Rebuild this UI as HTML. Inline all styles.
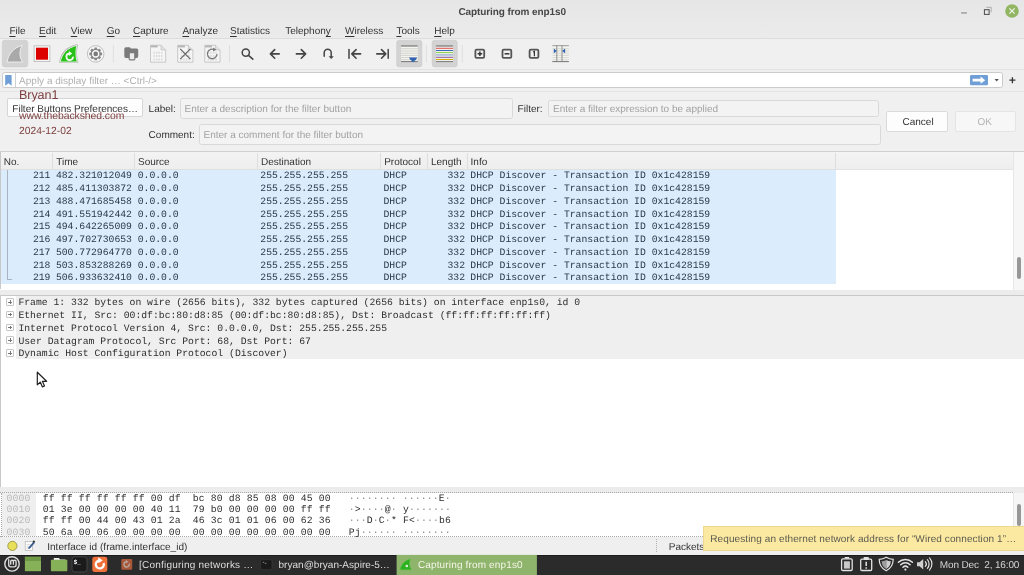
<!DOCTYPE html>
<html lang="en"><head><meta charset="utf-8"><title>Capturing from enp1s0</title>
<style>
html,body{margin:0;padding:0;}
body{width:1024px;height:575px;overflow:hidden;position:relative;background:#efefef;font-family:"Liberation Sans", sans-serif;}
div,span.t,svg{position:absolute;box-sizing:border-box;}
.t{white-space:pre;font-family:"Liberation Sans", sans-serif;text-rendering:geometricPrecision;}
.m{font-family:"Liberation Mono", monospace;}
.m i{font-style:normal;color:#8e8e8e;}
u{text-decoration:underline;text-underline-offset:1.7px;text-decoration-thickness:0.8px}
#root{left:0;top:0;width:1024px;height:575px;will-change:transform;}
</style></head><body><div id="root">
<div style="left:0px;top:0px;width:1024px;height:38px;background:linear-gradient(#e6e6e6,#e9e9e9 55%,#ebebeb);"></div>
<span class="t" style="left:458.5px;top:6px;font-size:10px;line-height:13px;color:#474747;font-weight:700;letter-spacing:-0.1px;">Capturing from enp1s0</span>
<svg style="left:955px;top:2px" width="66" height="20" viewBox="0 0 66 20"><rect x="6.1" y="10.4" width="5.8" height="1.1" fill="#858585"/><path d="M31.2 5.3h5v5" fill="none" stroke="#a0a0a0" stroke-width="0.8"/><rect x="29.4" y="7.7" width="4.7" height="4.7" fill="none" stroke="#4a4a4a" stroke-width="1"/><circle cx="57" cy="9" r="6.8" fill="#92b563"/><path d="M54.4 6.4l5.2 5.2M59.6 6.4l-5.2 5.2" stroke="#f4f8ee" stroke-width="1.1" fill="none"/></svg>
<div style="left:0px;top:38px;width:1024px;height:1px;background:#dcdcdc;"></div>
<span class="t" style="left:9.4px;top:25px;font-size:10px;line-height:13px;color:#333;"><u>F</u>ile</span>
<span class="t" style="left:39.1px;top:25px;font-size:10px;line-height:13px;color:#333;"><u>E</u>dit</span>
<span class="t" style="left:70.7px;top:25px;font-size:10px;line-height:13px;color:#333;"><u>V</u>iew</span>
<span class="t" style="left:106.7px;top:25px;font-size:10px;line-height:13px;color:#333;"><u>G</u>o</span>
<span class="t" style="left:133px;top:25px;font-size:10px;line-height:13px;color:#333;"><u>C</u>apture</span>
<span class="t" style="left:182.4px;top:25px;font-size:10px;line-height:13px;color:#333;"><u>A</u>nalyze</span>
<span class="t" style="left:230px;top:25px;font-size:10px;line-height:13px;color:#333;"><u>S</u>tatistics</span>
<span class="t" style="left:285.2px;top:25px;font-size:10px;line-height:13px;color:#333;">Telephon<u>y</u></span>
<span class="t" style="left:345px;top:25px;font-size:10px;line-height:13px;color:#333;"><u>W</u>ireless</span>
<span class="t" style="left:396.4px;top:25px;font-size:10px;line-height:13px;color:#333;"><u>T</u>ools</span>
<span class="t" style="left:434.2px;top:25px;font-size:10px;line-height:13px;color:#333;"><u>H</u>elp</span>
<div style="left:0px;top:39px;width:1024px;height:30px;background:#f0f0f0;"></div>
<div style="left:0px;top:68.5px;width:1024px;height:1px;background:#e2e2e2;"></div>
<svg style="left:0;top:39px" width="600" height="30" viewBox="0 39 600 30"><rect x="2.3" y="40.3" width="25.4" height="26.6" rx="2.5" fill="#d3d3d3" stroke="#cacaca" stroke-width="0.6"/><g transform="translate(0,0)"><path d="M7.2 62 C8.2 54 13.8 47.6 22.1 45.4 C19.2 50.6 19 56.8 22.6 62 Z" fill="#a9a9a9" stroke="#d3d3d3" stroke-width="2.2" stroke-linejoin="round"/><path d="M7.2 62 C8.2 54 13.8 47.6 22.1 45.4 C19.2 50.6 19 56.8 22.6 62 Z" fill="#a9a9a9" stroke="#f2f2f2" stroke-width="0.9" stroke-linejoin="round"/></g><rect x="34.1" y="45.8" width="15.8" height="15.8" fill="#f4f4f4" stroke="#b9b9b9" stroke-width="0.8"/><rect x="36" y="47.7" width="12" height="12" fill="#dc0000"/><path d="M60.3 62 C61.6 54 67.2 47.6 76.9 45.4 C75.4 50.6 75.6 57 77.3 62 Z" fill="#27c118" stroke="#b4b4b4" stroke-width="2.2" stroke-linejoin="round"/><path d="M60.3 62 C61.6 54 67.2 47.6 76.9 45.4 C75.4 50.6 75.6 57 77.3 62 Z" fill="#27c118" stroke="#e9f5e6" stroke-width="0.9" stroke-linejoin="round"/><path d="M73 56.6 A3.3 3.3 0 1 1 69.4 53.5" fill="none" stroke="#f2fbf0" stroke-width="1.8"/><path d="M68.9 51 L72.2 53.5 L68.9 55.9 Z" fill="#f2fbf0"/><circle cx="95.7" cy="53.9" r="8.3" fill="#f7f7f7" stroke="#b0b0b0" stroke-width="0.8"/><rect x="94.4" y="47.5" width="2.6" height="2.4" rx="0.5" fill="#858585" transform="rotate(0 95.7 53.9)"/><rect x="94.4" y="47.5" width="2.6" height="2.4" rx="0.5" fill="#858585" transform="rotate(45 95.7 53.9)"/><rect x="94.4" y="47.5" width="2.6" height="2.4" rx="0.5" fill="#858585" transform="rotate(90 95.7 53.9)"/><rect x="94.4" y="47.5" width="2.6" height="2.4" rx="0.5" fill="#858585" transform="rotate(135 95.7 53.9)"/><rect x="94.4" y="47.5" width="2.6" height="2.4" rx="0.5" fill="#858585" transform="rotate(180 95.7 53.9)"/><rect x="94.4" y="47.5" width="2.6" height="2.4" rx="0.5" fill="#858585" transform="rotate(225 95.7 53.9)"/><rect x="94.4" y="47.5" width="2.6" height="2.4" rx="0.5" fill="#858585" transform="rotate(270 95.7 53.9)"/><rect x="94.4" y="47.5" width="2.6" height="2.4" rx="0.5" fill="#858585" transform="rotate(315 95.7 53.9)"/><circle cx="95.7" cy="53.9" r="4.5" fill="none" stroke="#858585" stroke-width="1.4"/><circle cx="95.7" cy="53.9" r="2.3" fill="#7a7a7a"/><rect x="112.89999999999999" y="45" width="0.8" height="17.5" fill="#dadada"/><path d="M126.3 47.3h3.6l1 1.2h5.7a1.6 1.6 0 0 1 1.6 1.6v6.2a1.6 1.6 0 0 1-1.6 1.6h-10.7a1.6 1.6 0 0 1-1.6-1.6v-7.4a1.6 1.6 0 0 1 1.6-1.6z" fill="#7b7b7b"/><rect x="129.2" y="52.6" width="5.6" height="7.2" rx="0.8" fill="#ededed" stroke="#7b7b7b" stroke-width="1.2"/><path d="M150.5 45.3h10.6l4.6 4.6v12.3h-15.2z" fill="#f5f5f5" stroke="#bdbdbd" stroke-width="0.8"/><path d="M161.1 45.3v4.6h4.6" fill="#e2e2e2" stroke="#bdbdbd" stroke-width="0.7"/><rect x="150.9" y="45.5" width="6.8" height="1.9" fill="#b4b4b4"/><path d="M153.5 52.7h9.4" stroke="#dcdcdc" stroke-width="2" stroke-dasharray="1.6 0.9"/><path d="M153.5 56.1h9.4" stroke="#dcdcdc" stroke-width="2" stroke-dasharray="1.6 0.9"/><path d="M153.5 59.5h9.4" stroke="#dcdcdc" stroke-width="2" stroke-dasharray="1.6 0.9"/><path d="M177.7 45.3h10.6l4.6 4.6v12.3h-15.2z" fill="#f5f5f5" stroke="#bdbdbd" stroke-width="0.8"/><path d="M188.29999999999998 45.3v4.6h4.6" fill="#e2e2e2" stroke="#bdbdbd" stroke-width="0.7"/><rect x="178.1" y="45.5" width="6.8" height="1.9" fill="#b4b4b4"/><path d="M180.7 52.7h9.4" stroke="#dcdcdc" stroke-width="2" stroke-dasharray="1.6 0.9"/><path d="M180.7 56.1h9.4" stroke="#dcdcdc" stroke-width="2" stroke-dasharray="1.6 0.9"/><path d="M180.7 59.5h9.4" stroke="#dcdcdc" stroke-width="2" stroke-dasharray="1.6 0.9"/><path d="M180.2 48.9l10.2 10.2M190.4 48.9l-10.2 10.2" stroke="#6a6a6a" stroke-width="1.3" fill="none"/><path d="M204.8 45.3h10.6l4.6 4.6v12.3h-15.2z" fill="#f5f5f5" stroke="#bdbdbd" stroke-width="0.8"/><path d="M215.4 45.3v4.6h4.6" fill="#e2e2e2" stroke="#bdbdbd" stroke-width="0.7"/><rect x="205.20000000000002" y="45.5" width="6.8" height="1.9" fill="#b4b4b4"/><path d="M207.8 52.7h9.4" stroke="#dcdcdc" stroke-width="2" stroke-dasharray="1.6 0.9"/><path d="M207.8 56.1h9.4" stroke="#dcdcdc" stroke-width="2" stroke-dasharray="1.6 0.9"/><path d="M207.8 59.5h9.4" stroke="#dcdcdc" stroke-width="2" stroke-dasharray="1.6 0.9"/><path d="M214.6 49.8 A4.8 4.8 0 1 0 217 53.9" fill="none" stroke="#7a7a7a" stroke-width="1.3"/><path d="M213.2 47.6l3.2 2.1-3.4 1.9z" fill="#7a7a7a"/><rect x="229.0" y="45" width="0.8" height="17.5" fill="#dadada"/><circle cx="245.8" cy="52.6" r="3.6" fill="none" stroke="#454545" stroke-width="1.5"/><path d="M248.5 55.3l4.3 3.9" stroke="#454545" stroke-width="1.6" stroke-linecap="round"/><path d="M279.2 53.9H270.6M274.7 49.6L270.4 53.9l4.3 4.3" fill="none" stroke="#454545" stroke-width="1.6" stroke-linecap="round" stroke-linejoin="round"/><path d="M296.4 53.9H305.4M301.3 49.6L305.6 53.9l-4.3 4.3" fill="none" stroke="#454545" stroke-width="1.6" stroke-linecap="round" stroke-linejoin="round"/><path d="M324.2 56.2v-3.4a3.5 3.5 0 0 1 7 0v4" fill="none" stroke="#454545" stroke-width="1.5" stroke-linecap="round"/><path d="M328.6 56.2h5.2l-2.6 2.8z" fill="#454545"/><path d="M349 49.6v8.6" stroke="#454545" stroke-width="1.5" stroke-linecap="round"/><path d="M360.6 53.9H352.0M356.09999999999997 49.6L351.79999999999995 53.9l4.3 4.3" fill="none" stroke="#454545" stroke-width="1.6" stroke-linecap="round" stroke-linejoin="round"/><path d="M376.8 53.9H385.59999999999997M381.5 49.6L385.8 53.9l-4.3 4.3" fill="none" stroke="#454545" stroke-width="1.6" stroke-linecap="round" stroke-linejoin="round"/><path d="M388.2 49.6v8.6" stroke="#454545" stroke-width="1.5" stroke-linecap="round"/><rect x="396.7" y="40.3" width="25.2" height="26.6" rx="2.5" fill="#d3d3d3" stroke="#cacaca" stroke-width="0.6"/><rect x="401" y="45" width="16.8" height="17" fill="#f3f3ef"/><rect x="401" y="45" width="16.8" height="1.8" fill="#9a9a9a"/><rect x="401" y="48.3" width="16.8" height="0.9" fill="#cfcfcb"/><rect x="401" y="50.5" width="16.8" height="0.9" fill="#cfcfcb"/><rect x="401" y="52.7" width="16.8" height="0.9" fill="#cfcfcb"/><rect x="401" y="54.9" width="16.8" height="0.9" fill="#cfcfcb"/><rect x="401" y="57.1" width="16.8" height="0.9" fill="#cfcfcb"/><rect x="401" y="59.3" width="16.8" height="0.9" fill="#cfcfcb"/><rect x="401" y="61.2" width="16.8" height="0.9" fill="#666"/><path d="M409 57.6h8.2l-1.6 2.6h-1v1.6h-3v-1.6h-1z" fill="#2f63b2"/><rect x="425.90000000000003" y="45" width="0.8" height="17.5" fill="#dadada"/><rect x="432.2" y="40.3" width="25" height="26.6" rx="2.5" fill="#d3d3d3" stroke="#cacaca" stroke-width="0.6"/><rect x="436" y="45" width="17" height="17" fill="#f0f0ee"/><rect x="436" y="45" width="17" height="1.8" fill="#9a9a9a"/><rect x="436" y="47.8" width="17" height="1" fill="#e25252"/><rect x="436" y="50.0" width="17" height="1" fill="#3b6db3"/><rect x="436" y="52.1" width="17" height="1" fill="#8bd13f"/><rect x="436" y="54.1" width="17" height="1.6" fill="#a9bcd9"/><rect x="436" y="56.8" width="17" height="1" fill="#8c5a95"/><rect x="436" y="59.0" width="17" height="1" fill="#d5ab00"/><rect x="436" y="61.1" width="17" height="1" fill="#777"/><rect x="461.8" y="45" width="0.8" height="17.5" fill="#dadada"/><rect x="475.40000000000003" y="49.7" width="8.8" height="8.2" rx="1.2" fill="none" stroke="#555" stroke-width="1.8"/><path d="M477.6 53.8h4.6M479.9 51.5v4.6" stroke="#333" stroke-width="1.5"/><rect x="502.5" y="49.7" width="8.8" height="8.2" rx="1.2" fill="none" stroke="#555" stroke-width="1.8"/><path d="M504.6 53.8h4.8" stroke="#333" stroke-width="1.5"/><rect x="529.5999999999999" y="49.7" width="8.8" height="8.2" rx="1.2" fill="none" stroke="#555" stroke-width="1.8"/><path d="M533.2 52.1l1.2-.6v4.7" stroke="#333" stroke-width="1.2" fill="none"/><rect x="552.3" y="45.3" width="16.6" height="16.5" fill="#f3f3ef"/><rect x="552.3" y="48.3" width="16.6" height="0.9" fill="#d6d6d2"/><rect x="552.3" y="50.5" width="16.6" height="0.9" fill="#d6d6d2"/><rect x="552.3" y="52.7" width="16.6" height="0.9" fill="#d6d6d2"/><rect x="552.3" y="54.9" width="16.6" height="0.9" fill="#d6d6d2"/><rect x="552.3" y="57.1" width="16.6" height="0.9" fill="#d6d6d2"/><rect x="552.3" y="59.3" width="16.6" height="0.9" fill="#d6d6d2"/><rect x="552.3" y="45.2" width="16.6" height="1" fill="#9a9a9a"/><rect x="552.3" y="61.2" width="16.6" height="0.9" fill="#666"/><path d="M556.8 45.3v16.4M562 45.3v16.4" stroke="#7a7a7a" stroke-width="0.8"/><path d="M553.8 48.5l3 2.4-3 2.4z" fill="#2f63b2"/><path d="M565.1 48.5l-3 2.4 3 2.4z" fill="#2f63b2"/></svg>
<div style="left:0px;top:69.5px;width:1024px;height:19px;background:#efefef;"></div>
<div style="left:1.8px;top:72px;width:1001px;height:15.6px;background:#fff;border:1px solid #cbcbcb;border-radius:2.5px;"></div>
<div style="left:15.3px;top:72.6px;width:0.8px;height:14.4px;background:#d0d0d0;"></div>
<svg style="left:4px;top:74px" width="10" height="13" viewBox="4 74 10 13"><path d="M5.2 75h6.4v10.8l-3.2-2.6-3.2 2.6z" fill="#6f9fd6"/></svg>
<span class="t" style="left:19.1px;top:75px;font-size:10px;line-height:13px;color:#b0b0b0;">Apply a display filter … &lt;Ctrl-/&gt;</span>
<svg style="left:968px;top:73px" width="56" height="14" viewBox="968 73 56 14"><rect x="970" y="75" width="18" height="10.3" rx="1.2" fill="#6f9fd6"/><path d="M972.6 78.8h8v-2.2l4.6 3.6-4.6 3.6v-2.2h-8z" fill="#fff"/><path d="M994.5 78.9h4.4l-2.2 2.6z" fill="#555"/><path d="M1009.4 80.2h6M1012.4 77.2v6" stroke="#333" stroke-width="1.3"/></svg>
<div style="left:0px;top:88.5px;width:1024px;height:62.5px;background:#f0f0f0;"></div>
<div style="left:0px;top:91.2px;width:1024px;height:0.8px;background:#e4e4e4;"></div>
<div style="left:7.3px;top:98.2px;width:135.4px;height:19px;background:#fdfdfd;border:1px solid #d6d6d6;border-radius:2px;"></div>
<span class="t" style="left:12.3px;top:103px;font-size:10px;line-height:13px;color:#333;">Filter Buttons Preferences…</span>
<span class="t" style="left:148.6px;top:103px;font-size:10px;line-height:13px;color:#333;">Label:</span>
<div style="left:180.2px;top:98.3px;width:332.5px;height:20.3px;background:#f3f3f3;border:1px solid #d9d9d9;border-radius:2.5px;"></div>
<span class="t" style="left:184.5px;top:103px;font-size:10px;line-height:13px;color:#a2a2a2;">Enter a description for the filter button</span>
<span class="t" style="left:517.6px;top:103px;font-size:10px;line-height:13px;color:#333;">Filter:</span>
<div style="left:548.3px;top:100.4px;width:330.3px;height:16.2px;background:#f3f3f3;border:1px solid #d9d9d9;border-radius:2.5px;"></div>
<span class="t" style="left:553px;top:103px;font-size:10px;line-height:13px;color:#a2a2a2;">Enter a filter expression to be applied</span>
<span class="t" style="left:148.6px;top:129px;font-size:10px;line-height:13px;color:#333;">Comment:</span>
<div style="left:199.2px;top:123.5px;width:681.5px;height:21px;background:#f3f3f3;border:1px solid #d9d9d9;border-radius:2.5px;"></div>
<span class="t" style="left:203.5px;top:129px;font-size:10px;line-height:13px;color:#a2a2a2;">Enter a comment for the filter button</span>
<div style="left:886.4px;top:111.4px;width:61.6px;height:20.2px;background:#fdfdfd;border:1px solid #dadada;border-radius:2px;"></div>
<span class="t" style="left:902.5px;top:116px;font-size:10px;line-height:13px;color:#333;">Cancel</span>
<div style="left:954.5px;top:111.4px;width:61.6px;height:20.2px;background:#f7f7f7;border:1px solid #e4e4e4;border-radius:2px;"></div>
<span class="t" style="left:977.5px;top:116px;font-size:10px;line-height:13px;color:#b4b4b4;">OK</span>
<span class="t" style="left:19px;top:87px;font-size:12.6px;line-height:16px;color:#7d3f3f;letter-spacing:-0.1px;">Bryan1</span>
<span class="t" style="left:19px;top:110px;font-size:10.4px;line-height:14px;color:#7d3f3f;letter-spacing:-0.05px;">www.thebackshed.com</span>
<span class="t" style="left:19px;top:125px;font-size:10.3px;line-height:13px;color:#7d3f3f;">2024-12-02</span>
<div style="left:0px;top:151px;width:1024px;height:1px;background:#cfcfcf;"></div>
<div style="left:0px;top:152px;width:1024px;height:17.5px;background:#fff;"></div>
<div style="left:0px;top:152px;width:835.8px;height:17.6px;background:linear-gradient(#f3f3f3,#eeeeee);border-bottom:1px solid #e0e0e0;"></div>
<div style="left:835.8px;top:152px;width:177.6px;height:17.6px;background:linear-gradient(#f4f4f4,#eeeeee);border-bottom:1px solid #e2e2e2;"></div>
<div style="left:52.0px;top:152.5px;width:0.8px;height:16.5px;background:#dedede;"></div>
<div style="left:133.9px;top:152.5px;width:0.8px;height:16.5px;background:#dedede;"></div>
<div style="left:257.40000000000003px;top:152.5px;width:0.8px;height:16.5px;background:#dedede;"></div>
<div style="left:380.0px;top:152.5px;width:0.8px;height:16.5px;background:#dedede;"></div>
<div style="left:427.0px;top:152.5px;width:0.8px;height:16.5px;background:#dedede;"></div>
<div style="left:466.90000000000003px;top:152.5px;width:0.8px;height:16.5px;background:#dedede;"></div>
<div style="left:835.4px;top:152.5px;width:0.8px;height:16.5px;background:#dedede;"></div>
<span class="t" style="left:3.8px;top:156px;font-size:10px;line-height:13px;color:#333;">No.</span>
<span class="t" style="left:56.2px;top:156px;font-size:10px;line-height:13px;color:#333;">Time</span>
<span class="t" style="left:138px;top:156px;font-size:10px;line-height:13px;color:#333;">Source</span>
<span class="t" style="left:261px;top:156px;font-size:10px;line-height:13px;color:#333;">Destination</span>
<span class="t" style="left:384.2px;top:156px;font-size:10px;line-height:13px;color:#333;">Protocol</span>
<span class="t" style="left:431px;top:156px;font-size:10px;line-height:13px;color:#333;">Length</span>
<span class="t" style="left:470.6px;top:156px;font-size:10px;line-height:13px;color:#333;">Info</span>
<div style="left:0px;top:169.5px;width:1016px;height:121px;background:#fff;"></div>
<div style="left:0px;top:169.5px;width:835.8px;height:114.8px;background:#dbecfd;"></div>
<span class="t m" style="left:32.9px;top:169px;font-size:9.75px;line-height:13px;color:#2a3947;">211</span>
<span class="t m" style="left:55.9px;top:169px;font-size:9.75px;line-height:13px;color:#2a3947;">482.321012049</span>
<span class="t m" style="left:137.7px;top:169px;font-size:9.75px;line-height:13px;color:#2a3947;">0.0.0.0</span>
<span class="t m" style="left:260.3px;top:169px;font-size:9.75px;line-height:13px;color:#2a3947;">255.255.255.255</span>
<span class="t m" style="left:383.5px;top:169px;font-size:9.75px;line-height:13px;color:#2a3947;">DHCP</span>
<span class="t m" style="left:447.5px;top:169px;font-size:9.75px;line-height:13px;color:#2a3947;">332</span>
<span class="t m" style="left:470.3px;top:169px;font-size:9.75px;line-height:13px;color:#2a3947;">DHCP Discover - Transaction ID 0x1c428159</span>
<span class="t m" style="left:32.9px;top:182px;font-size:9.75px;line-height:13px;color:#2a3947;">212</span>
<span class="t m" style="left:55.9px;top:182px;font-size:9.75px;line-height:13px;color:#2a3947;">485.411303872</span>
<span class="t m" style="left:137.7px;top:182px;font-size:9.75px;line-height:13px;color:#2a3947;">0.0.0.0</span>
<span class="t m" style="left:260.3px;top:182px;font-size:9.75px;line-height:13px;color:#2a3947;">255.255.255.255</span>
<span class="t m" style="left:383.5px;top:182px;font-size:9.75px;line-height:13px;color:#2a3947;">DHCP</span>
<span class="t m" style="left:447.5px;top:182px;font-size:9.75px;line-height:13px;color:#2a3947;">332</span>
<span class="t m" style="left:470.3px;top:182px;font-size:9.75px;line-height:13px;color:#2a3947;">DHCP Discover - Transaction ID 0x1c428159</span>
<span class="t m" style="left:32.9px;top:195px;font-size:9.75px;line-height:13px;color:#2a3947;">213</span>
<span class="t m" style="left:55.9px;top:195px;font-size:9.75px;line-height:13px;color:#2a3947;">488.471685458</span>
<span class="t m" style="left:137.7px;top:195px;font-size:9.75px;line-height:13px;color:#2a3947;">0.0.0.0</span>
<span class="t m" style="left:260.3px;top:195px;font-size:9.75px;line-height:13px;color:#2a3947;">255.255.255.255</span>
<span class="t m" style="left:383.5px;top:195px;font-size:9.75px;line-height:13px;color:#2a3947;">DHCP</span>
<span class="t m" style="left:447.5px;top:195px;font-size:9.75px;line-height:13px;color:#2a3947;">332</span>
<span class="t m" style="left:470.3px;top:195px;font-size:9.75px;line-height:13px;color:#2a3947;">DHCP Discover - Transaction ID 0x1c428159</span>
<span class="t m" style="left:32.9px;top:208px;font-size:9.75px;line-height:13px;color:#2a3947;">214</span>
<span class="t m" style="left:55.9px;top:208px;font-size:9.75px;line-height:13px;color:#2a3947;">491.551942442</span>
<span class="t m" style="left:137.7px;top:208px;font-size:9.75px;line-height:13px;color:#2a3947;">0.0.0.0</span>
<span class="t m" style="left:260.3px;top:208px;font-size:9.75px;line-height:13px;color:#2a3947;">255.255.255.255</span>
<span class="t m" style="left:383.5px;top:208px;font-size:9.75px;line-height:13px;color:#2a3947;">DHCP</span>
<span class="t m" style="left:447.5px;top:208px;font-size:9.75px;line-height:13px;color:#2a3947;">332</span>
<span class="t m" style="left:470.3px;top:208px;font-size:9.75px;line-height:13px;color:#2a3947;">DHCP Discover - Transaction ID 0x1c428159</span>
<span class="t m" style="left:32.9px;top:220px;font-size:9.75px;line-height:13px;color:#2a3947;">215</span>
<span class="t m" style="left:55.9px;top:220px;font-size:9.75px;line-height:13px;color:#2a3947;">494.642265009</span>
<span class="t m" style="left:137.7px;top:220px;font-size:9.75px;line-height:13px;color:#2a3947;">0.0.0.0</span>
<span class="t m" style="left:260.3px;top:220px;font-size:9.75px;line-height:13px;color:#2a3947;">255.255.255.255</span>
<span class="t m" style="left:383.5px;top:220px;font-size:9.75px;line-height:13px;color:#2a3947;">DHCP</span>
<span class="t m" style="left:447.5px;top:220px;font-size:9.75px;line-height:13px;color:#2a3947;">332</span>
<span class="t m" style="left:470.3px;top:220px;font-size:9.75px;line-height:13px;color:#2a3947;">DHCP Discover - Transaction ID 0x1c428159</span>
<span class="t m" style="left:32.9px;top:233px;font-size:9.75px;line-height:13px;color:#2a3947;">216</span>
<span class="t m" style="left:55.9px;top:233px;font-size:9.75px;line-height:13px;color:#2a3947;">497.702730653</span>
<span class="t m" style="left:137.7px;top:233px;font-size:9.75px;line-height:13px;color:#2a3947;">0.0.0.0</span>
<span class="t m" style="left:260.3px;top:233px;font-size:9.75px;line-height:13px;color:#2a3947;">255.255.255.255</span>
<span class="t m" style="left:383.5px;top:233px;font-size:9.75px;line-height:13px;color:#2a3947;">DHCP</span>
<span class="t m" style="left:447.5px;top:233px;font-size:9.75px;line-height:13px;color:#2a3947;">332</span>
<span class="t m" style="left:470.3px;top:233px;font-size:9.75px;line-height:13px;color:#2a3947;">DHCP Discover - Transaction ID 0x1c428159</span>
<span class="t m" style="left:32.9px;top:246px;font-size:9.75px;line-height:13px;color:#2a3947;">217</span>
<span class="t m" style="left:55.9px;top:246px;font-size:9.75px;line-height:13px;color:#2a3947;">500.772964770</span>
<span class="t m" style="left:137.7px;top:246px;font-size:9.75px;line-height:13px;color:#2a3947;">0.0.0.0</span>
<span class="t m" style="left:260.3px;top:246px;font-size:9.75px;line-height:13px;color:#2a3947;">255.255.255.255</span>
<span class="t m" style="left:383.5px;top:246px;font-size:9.75px;line-height:13px;color:#2a3947;">DHCP</span>
<span class="t m" style="left:447.5px;top:246px;font-size:9.75px;line-height:13px;color:#2a3947;">332</span>
<span class="t m" style="left:470.3px;top:246px;font-size:9.75px;line-height:13px;color:#2a3947;">DHCP Discover - Transaction ID 0x1c428159</span>
<span class="t m" style="left:32.9px;top:259px;font-size:9.75px;line-height:13px;color:#2a3947;">218</span>
<span class="t m" style="left:55.9px;top:259px;font-size:9.75px;line-height:13px;color:#2a3947;">503.853288269</span>
<span class="t m" style="left:137.7px;top:259px;font-size:9.75px;line-height:13px;color:#2a3947;">0.0.0.0</span>
<span class="t m" style="left:260.3px;top:259px;font-size:9.75px;line-height:13px;color:#2a3947;">255.255.255.255</span>
<span class="t m" style="left:383.5px;top:259px;font-size:9.75px;line-height:13px;color:#2a3947;">DHCP</span>
<span class="t m" style="left:447.5px;top:259px;font-size:9.75px;line-height:13px;color:#2a3947;">332</span>
<span class="t m" style="left:470.3px;top:259px;font-size:9.75px;line-height:13px;color:#2a3947;">DHCP Discover - Transaction ID 0x1c428159</span>
<span class="t m" style="left:32.9px;top:271px;font-size:9.75px;line-height:13px;color:#2a3947;">219</span>
<span class="t m" style="left:55.9px;top:271px;font-size:9.75px;line-height:13px;color:#2a3947;">506.933632410</span>
<span class="t m" style="left:137.7px;top:271px;font-size:9.75px;line-height:13px;color:#2a3947;">0.0.0.0</span>
<span class="t m" style="left:260.3px;top:271px;font-size:9.75px;line-height:13px;color:#2a3947;">255.255.255.255</span>
<span class="t m" style="left:383.5px;top:271px;font-size:9.75px;line-height:13px;color:#2a3947;">DHCP</span>
<span class="t m" style="left:447.5px;top:271px;font-size:9.75px;line-height:13px;color:#2a3947;">332</span>
<span class="t m" style="left:470.3px;top:271px;font-size:9.75px;line-height:13px;color:#2a3947;">DHCP Discover - Transaction ID 0x1c428159</span>
<div style="left:6.6px;top:169.5px;width:1px;height:104px;background:#a9b4be;"></div>
<div style="left:6.6px;top:273px;width:1px;height:7px;background:#a9b4be;"></div>
<div style="left:6.6px;top:279.3px;width:5.6px;height:1px;background:#a9b4be;"></div>
<div style="left:0px;top:152px;width:0.8px;height:137px;background:#c8c8c8;"></div>
<div style="left:1013.4px;top:152px;width:10.6px;height:138px;background:#f6f6f6;border-left:1px solid #e6e6e6;"></div>
<div style="left:1016.8px;top:257px;width:4px;height:21.5px;background:#979797;border-radius:2px;"></div>
<div style="left:0px;top:290px;width:1024px;height:5px;background:#ececec;"></div>
<div style="left:0px;top:294.6px;width:1024px;height:0.9px;background:#c9c9c9;"></div>
<div style="left:0px;top:295.5px;width:1024px;height:191.5px;background:#fff;"></div>
<div style="left:0px;top:295.5px;width:0.8px;height:191.5px;background:#c8c8c8;"></div>
<div style="left:15.6px;top:295.5px;width:1008.4px;height:63.7px;background:#efefef;"></div>
<span class="t m" style="left:18.4px;top:296px;font-size:9.75px;line-height:13px;color:#2e2e2e;">Frame 1: 332 bytes on wire (2656 bits), 332 bytes captured (2656 bits) on interface enp1s0, id 0</span>
<div style="left:6.3px;top:298.2px;width:7.4px;height:7.4px;background:#fff;border:0.8px solid #c6c6c6;border-radius:1px;"></div>
<div style="left:8.2px;top:301.5px;width:3.6px;height:0.8px;background:#777;"></div>
<div style="left:9.6px;top:300.09999999999997px;width:0.8px;height:3.6px;background:#777;"></div>
<span class="t m" style="left:18.4px;top:309px;font-size:9.75px;line-height:13px;color:#2e2e2e;">Ethernet II, Src: 00:df:bc:80:d8:85 (00:df:bc:80:d8:85), Dst: Broadcast (ff:ff:ff:ff:ff:ff)</span>
<div style="left:6.3px;top:310.95px;width:7.4px;height:7.4px;background:#fff;border:0.8px solid #c6c6c6;border-radius:1px;"></div>
<div style="left:8.2px;top:314.25px;width:3.6px;height:0.8px;background:#777;"></div>
<div style="left:9.6px;top:312.84999999999997px;width:0.8px;height:3.6px;background:#777;"></div>
<span class="t m" style="left:18.4px;top:322px;font-size:9.75px;line-height:13px;color:#2e2e2e;">Internet Protocol Version 4, Src: 0.0.0.0, Dst: 255.255.255.255</span>
<div style="left:6.3px;top:323.7px;width:7.4px;height:7.4px;background:#fff;border:0.8px solid #c6c6c6;border-radius:1px;"></div>
<div style="left:8.2px;top:327.0px;width:3.6px;height:0.8px;background:#777;"></div>
<div style="left:9.6px;top:325.59999999999997px;width:0.8px;height:3.6px;background:#777;"></div>
<span class="t m" style="left:18.4px;top:335px;font-size:9.75px;line-height:13px;color:#2e2e2e;">User Datagram Protocol, Src Port: 68, Dst Port: 67</span>
<div style="left:6.3px;top:336.45px;width:7.4px;height:7.4px;background:#fff;border:0.8px solid #c6c6c6;border-radius:1px;"></div>
<div style="left:8.2px;top:339.75px;width:3.6px;height:0.8px;background:#777;"></div>
<div style="left:9.6px;top:338.34999999999997px;width:0.8px;height:3.6px;background:#777;"></div>
<span class="t m" style="left:18.4px;top:347px;font-size:9.75px;line-height:13px;color:#2e2e2e;">Dynamic Host Configuration Protocol (Discover)</span>
<div style="left:6.3px;top:349.2px;width:7.4px;height:7.4px;background:#fff;border:0.8px solid #c6c6c6;border-radius:1px;"></div>
<div style="left:8.2px;top:352.5px;width:3.6px;height:0.8px;background:#777;"></div>
<div style="left:9.6px;top:351.09999999999997px;width:0.8px;height:3.6px;background:#777;"></div>
<svg style="left:36px;top:370.6px" width="12" height="18" viewBox="0 0 12 18"><path d="M1.3 1.200v12.600l3-2.700 2.100 4.800 2.100-.9-2.100-4.700h4.200z" fill="#fff" stroke="#222" stroke-width="1.2" stroke-linejoin="round"/></svg>
<div style="left:0px;top:487px;width:1024px;height:5.5px;background:#ececec;"></div>
<div style="left:0px;top:492.5px;width:1016px;height:44px;background:#fff;"></div>
<div style="left:0px;top:492.4px;width:1013.4px;height:0px;border-top:1px dotted #a8a8a8;"></div>
<div style="left:0px;top:535.8px;width:1013.4px;height:0px;border-top:1px dotted #a8a8a8;"></div>
<div style="left:0.6px;top:492.5px;width:0px;height:44px;border-left:1px dotted #a8a8a8;"></div>
<div style="left:1.6px;top:493.4px;width:34.6px;height:42.4px;background:#efefef;"></div>
<span class="t m" style="left:6.6px;top:492px;font-size:9.75px;line-height:13px;color:#b9b9b9;letter-spacing:0.15px;">0000</span>
<span class="t m" style="left:42.7px;top:492px;font-size:9.75px;line-height:13px;color:#2e2e2e;letter-spacing:0.15px;">ff ff ff ff ff ff 00 df  bc 80 d8 85 08 00 45 00</span>
<span class="t m" style="left:348.8px;top:492px;font-size:9.75px;line-height:13px;color:#2e2e2e;letter-spacing:0.15px;"><i>········</i> <i>······</i>E<i>·</i></span>
<span class="t m" style="left:6.6px;top:503px;font-size:9.75px;line-height:13px;color:#b9b9b9;letter-spacing:0.15px;">0010</span>
<span class="t m" style="left:42.7px;top:503px;font-size:9.75px;line-height:13px;color:#2e2e2e;letter-spacing:0.15px;">01 3e 00 00 00 00 40 11  79 b0 00 00 00 00 ff ff</span>
<span class="t m" style="left:348.8px;top:503px;font-size:9.75px;line-height:13px;color:#2e2e2e;letter-spacing:0.15px;"><i>·</i>&gt;<i>····</i>@<i>·</i> y<i>·······</i></span>
<span class="t m" style="left:6.6px;top:514px;font-size:9.75px;line-height:13px;color:#b9b9b9;letter-spacing:0.15px;">0020</span>
<span class="t m" style="left:42.7px;top:514px;font-size:9.75px;line-height:13px;color:#2e2e2e;letter-spacing:0.15px;">ff ff 00 44 00 43 01 2a  46 3c 01 01 06 00 62 36</span>
<span class="t m" style="left:348.8px;top:514px;font-size:9.75px;line-height:13px;color:#2e2e2e;letter-spacing:0.15px;"><i>···</i>D<i>·</i>C<i>·</i>* F&lt;<i>····</i>b6</span>
<span class="t m" style="left:6.6px;top:526px;font-size:9.75px;line-height:13px;color:#b9b9b9;letter-spacing:0.15px;">0030</span>
<span class="t m" style="left:42.7px;top:526px;font-size:9.75px;line-height:13px;color:#2e2e2e;letter-spacing:0.15px;">50 6a 00 06 00 00 00 00  00 00 00 00 00 00 00 00</span>
<span class="t m" style="left:348.8px;top:526px;font-size:9.75px;line-height:13px;color:#2e2e2e;letter-spacing:0.15px;">Pj<i>······</i> <i>········</i></span>
<div style="left:1013.4px;top:492.5px;width:10.6px;height:44px;background:#f6f6f6;border-left:1px solid #e6e6e6;"></div>
<div style="left:1016.9px;top:504.4px;width:4px;height:22px;background:#979797;border-radius:2px;"></div>
<div style="left:0px;top:536.8px;width:1024px;height:17.2px;background:#efefef;"></div>
<svg style="left:5px;top:539px" width="32" height="14" viewBox="5 539 32 14"><circle cx="12.4" cy="545.9" r="4.6" fill="#e8e05a" stroke="#8f8a3a" stroke-width="0.8"/><rect x="25.2" y="541.6" width="7.4" height="9" fill="#fbfbfb" stroke="#b5b5b5" stroke-width="0.7"/><path d="M26.6 544.6h4.6M26.6 546.4h4.6M26.6 548.2h3" stroke="#cfcfcf" stroke-width="0.7"/><path d="M28.6 547.2l5-5.6 1.4 1.2-5 5.6-1.9.6z" fill="#3d5f8f"/><path d="M32.6 541.4l1.1-1.2 1.5 1.3-1.1 1.2z" fill="#333"/></svg>
<span class="t" style="left:47.2px;top:541px;font-size:10px;line-height:13px;color:#333;letter-spacing:0.04px;">Interface id (frame.interface_id)</span>
<div style="left:656.4px;top:538.5px;width:0px;height:13.5px;border-left:1px dotted #b0b0b0;"></div>
<span class="t" style="left:668.8px;top:541px;font-size:10px;line-height:13px;color:#333;">Packets</span>
<div style="left:703px;top:525.6px;width:321px;height:25.9px;background:#fbe9a1;border:1px solid #ecd98d;border-right:0;"></div>
<span class="t" style="left:710.3px;top:533px;font-size:10px;line-height:13px;color:#5a5a50;letter-spacing:0.1px;">Requesting an ethernet network address for “Wired connection 1”…</span>
<div style="left:0px;top:554.5px;width:1024px;height:20.5px;background:#2b2b2b;"></div>
<div style="left:0px;top:554.5px;width:1024px;height:0.9px;background:#1c1c1c;"></div>
<svg style="left:0;top:554px" width="1024" height="21" viewBox="0 554 1024 21"><circle cx="12" cy="563.9" r="7.2" fill="none" stroke="#dcdcdc" stroke-width="1.4"/><path d="M8.7 559.6v5.2a2 2 0 0 0 2 2h3.4a2 2 0 0 0 2-2v-3.2a1.35 1.35 0 0 0-2.7 0v2.6m0-2.6a1.35 1.35 0 0 0-2.7 0v2.6" fill="none" stroke="#dcdcdc" stroke-width="1.35" stroke-linecap="round" stroke-linejoin="round"/><rect x="24.9" y="556.8" width="16.1" height="14.4" fill="#87b158"/><rect x="24.9" y="556.8" width="16.1" height="3.6" fill="#6f9a48"/><rect x="24.9" y="559.9" width="16.1" height="0.6" fill="#5f8a3c"/><path d="M53.8 557.9h5.2l1 1.6h5.4v1h-11.6z" fill="#f2f2f2"/><rect x="50.9" y="559.8" width="16.4" height="11.4" rx="0.8" fill="#87b158"/><rect x="72" y="556.8" width="15" height="15.2" rx="2.8" fill="#1b1b1b" stroke="#454545" stroke-width="1"/><rect x="92.3" y="556.8" width="15" height="15.1" rx="2.6" fill="#f0703a"/><path d="M103.6 563.2 A4 4 0 1 1 99.2 560.5" fill="none" stroke="#fff" stroke-width="2.3"/><path d="M98.2 557.2l4.600 3.300-4.600 2.800z" fill="#fff"/><rect x="121.3" y="558.9" width="10.9" height="10.9" rx="1.2" fill="#a9593a"/><path d="M129.2 563.6 A2.7 2.7 0 1 1 126.2 561.7" fill="none" stroke="#b9aaa4" stroke-width="1.3"/><path d="M125.8 559.9l2.6 1.9-2.6 1.6z" fill="#b9aaa4"/><rect x="260.6" y="559.7" width="11.4" height="10" rx="1.6" fill="#1a1a1a" stroke="#3a3a3a" stroke-width="0.7"/><path d="M262.8 562.3h1.4M264.8 563.3h1.6" stroke="#bbb" stroke-width="0.7"/><rect x="396.6" y="554.9" width="140.3" height="20.1" fill="#8fb46b"/><path d="M400.2 569.8 C400.9 564.6 404.6 560.4 410.4 558.9 C408.9 562.4 409.2 566.4 411.5 569.8 Z" fill="#2eb11f" stroke="#59c24c" stroke-width="0.6"/><circle cx="406.8" cy="566" r="1.3" fill="#dff2da"/><rect x="841.6" y="558.9" width="10.6" height="11.6" rx="1.3" fill="none" stroke="#e2e2e2" stroke-width="1.3"/><rect x="844.7" y="557" width="4.4" height="1.6" fill="#e2e2e2"/><rect x="843.9" y="561.3" width="6" height="7.3" fill="#c9c9c9"/><rect x="860.7" y="559.2" width="11" height="11.3" rx="1.2" fill="none" stroke="#e2e2e2" stroke-width="1.3"/><rect x="863.6" y="557" width="5.2" height="3" rx="0.8" fill="#e2e2e2"/><path d="M866.2 561.8v4.2M866.2 567.2v1.5" stroke="#e2e2e2" stroke-width="1.5"/><path d="M886.2 557.3c2.4 1.5 4.8 2 7 2 0 5.6-2.3 9.2-7 11.5-4.7-2.3-7-5.9-7-11.5 2.2 0 4.600-.5 7-2z" fill="none" stroke="#e2e2e2" stroke-width="1.2"/><path d="M886.2 559.9c1.600.9 3.100 1.300 4.600 1.400-.2 3.800-1.700 6.100-4.600 7.700z" fill="#cfcfcf"/><path d="M886.2 559.900c-1.600.9-3.100 1.300-4.600 1.400.2 3.800 1.700 6.100 4.600 7.700z" fill="#9d9d9d"/><path d="M898.400 562.300a10 10 0 0 1 14 0M900.700 564.800a6.700 6.700 0 0 1 9.400 0M903 567.300a3.400 3.400 0 0 1 4.800 0" fill="none" stroke="#e2e2e2" stroke-width="1.5" stroke-linecap="round"/><circle cx="905.4" cy="569.600" r="1.100" fill="#e2e2e2"/><path d="M917 562.2h2.600l3.600-3.300v10.600l-3.600-3.300h-2.600z" fill="#cfcfcf"/><path d="M925.300 561.600a3.500 3.500 0 0 1 0 4.800M927.400 559.700a6.300 6.300 0 0 1 0 8.600M929.500 557.900a9 9 0 0 1 0 12.200" fill="none" stroke="#e2e2e2" stroke-width="1.200" stroke-linecap="round"/></svg>
<span class="t" style="left:73.8px;top:559px;font-size:6.2px;line-height:8px;color:#fff;font-weight:700;">$_</span>
<span class="t" style="left:139px;top:559px;font-size:10px;line-height:13px;color:#dedede;letter-spacing:0.22px;">[Configuring networks …</span>
<span class="t" style="left:278.5px;top:559px;font-size:10px;line-height:13px;color:#dedede;letter-spacing:0.03px;">bryan@bryan-Aspire-5…</span>
<span class="t" style="left:417.9px;top:559px;font-size:10px;line-height:13px;color:#f6f6ea;letter-spacing:0.15px;">Capturing from enp1s0</span>
<span class="t" style="left:939.8px;top:559px;font-size:10px;line-height:13px;color:#d4d4d4;letter-spacing:-0.13px;">Mon Dec  2, 16:00</span>
</div></body></html>
